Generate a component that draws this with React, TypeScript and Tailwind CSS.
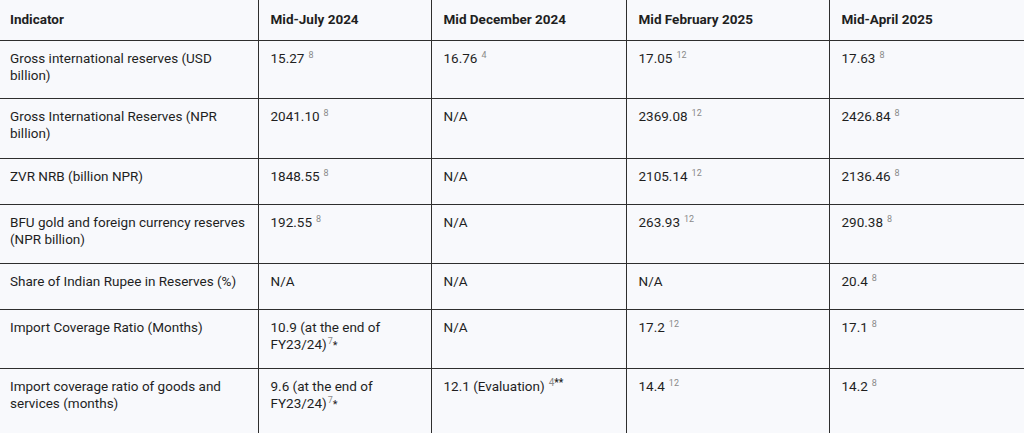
import type { ReactNode } from 'react';

type Row = {
  label: string;
  cells: ReactNode[];
  h: string;
};

const Sup = ({ n, gap = true }: { n: string; gap?: boolean }) => (
  <span className={`${gap ? 'ml-[4px]' : 'ml-[1px]'} text-[9px] leading-none text-[#8a8a8a] align-[5px]`}>{n}</span>
);

const rows: Row[] = [
  {
    label: 'Gross international reserves (USD billion)',
    cells: [
      <>15.27<Sup n="8" /></>,
      <>16.76<Sup n="4" /></>,
      <>17.05<Sup n="12" /></>,
      <>17.63<Sup n="8" /></>,
    ],
    h: 'h-[58px]',
  },
  {
    label: 'Gross International Reserves (NPR billion)',
    cells: [
      <>2041.10<Sup n="8" /></>,
      'N/A',
      <>2369.08<Sup n="12" /></>,
      <>2426.84<Sup n="8" /></>,
    ],
    h: 'h-[60px]',
  },
  {
    label: 'ZVR NRB (billion NPR)',
    cells: [
      <>1848.55<Sup n="8" /></>,
      'N/A',
      <>2105.14<Sup n="12" /></>,
      <>2136.46<Sup n="8" /></>,
    ],
    h: 'h-[46px]',
  },
  {
    label: 'BFU gold and foreign currency reserves (NPR billion)',
    cells: [
      <>192.55<Sup n="8" /></>,
      'N/A',
      <>263.93<Sup n="12" /></>,
      <>290.38<Sup n="8" /></>,
    ],
    h: 'h-[59px]',
  },
  {
    label: 'Share of Indian Rupee in Reserves (%)',
    cells: ['N/A', 'N/A', 'N/A', <>20.4<Sup n="8" /></>],
    h: 'h-[46px]',
  },
  {
    label: 'Import Coverage Ratio (Months)',
    cells: [
      <>10.9 (at the end of FY23/24)<Sup n="7" gap={false} /><span className="text-[11px]">*</span></>,
      'N/A',
      <>17.2<Sup n="12" /></>,
      <>17.1<Sup n="8" /></>,
    ],
    h: 'h-[59px]',
  },
  {
    label: 'Import coverage ratio of goods and services (months)',
    cells: [
      <>9.6 (at the end of FY23/24)<Sup n="7" gap={false} /><span className="text-[11px]">*</span></>,
      <>
        12.1 (Evaluation)
        <span className="ml-[4px] text-[10px] leading-none align-[5px]">
          <span className="text-[#8a8a8a]">4</span>
          <span className="font-bold text-[#1f1f1f]">**</span>
        </span>
      </>,
      <>14.4<Sup n="12" /></>,
      <>14.2<Sup n="8" /></>,
    ],
    h: 'h-[80px]',
  },
];

const headers = ['Mid-July 2024', 'Mid December 2024', 'Mid February 2025', 'Mid-April 2025'];

export default function App() {
  return (
    <div className="w-[1024px] h-[433px] overflow-hidden bg-[#f8f9fc] font-['Roboto',sans-serif] text-[13.5px] leading-[17px] text-[#1f1f1f]">
      <table className="w-[1024px] table-fixed border-collapse">
        <colgroup>
          <col className="w-[258px]" />
          <col className="w-[173px]" />
          <col className="w-[195px]" />
          <col className="w-[203px]" />
          <col className="w-[195px]" />
        </colgroup>
        <thead>
          <tr className="h-[40px] border-b border-[#2e2e2e]">
            <th className="pl-[10px] pr-3 text-left align-middle font-bold">Indicator</th>
            {headers.map((h) => (
              <th key={h} className="border-l border-[#2e2e2e] pl-[12px] pr-3 text-left align-middle font-bold">
                {h}
              </th>
            ))}
          </tr>
        </thead>
        <tbody>
          {rows.map((r) => (
            <tr key={r.label} className={`${r.h} border-b border-[#2e2e2e]`}>
              <td className="pl-[10px] pr-3 pt-[9px] align-top">{r.label}</td>
              {r.cells.map((c, i) => (
                <td key={i} className="border-l border-[#2e2e2e] pl-[12px] pr-3 pt-[9px] align-top">
                  {c}
                </td>
              ))}
            </tr>
          ))}
        </tbody>
      </table>
    </div>
  );
}
